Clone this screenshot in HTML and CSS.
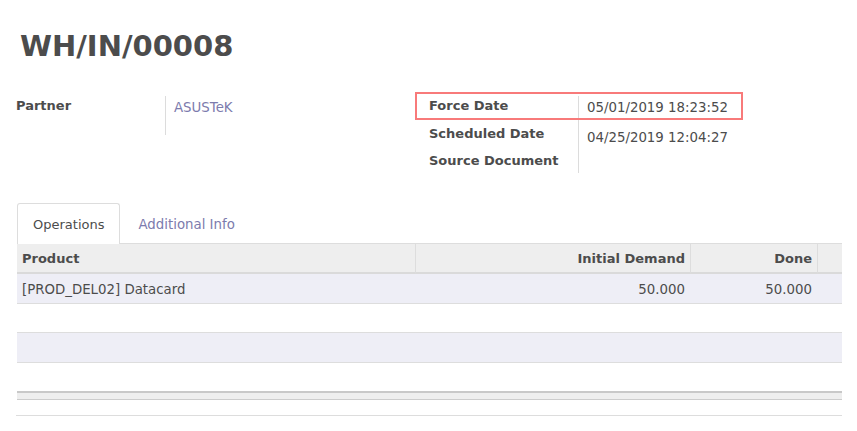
FILE: index.html
```html
<!DOCTYPE html>
<html lang="en">
<head>
<meta charset="utf-8">
<title>WH/IN/00008</title>
<link rel="stylesheet" href="styles.css">
</head>
<body>
<div class="sheet">
  <h1 class="title">WH/IN/00008</h1>

  <div class="groups">
    <div class="group">
      <div class="row row-partner">
        <div class="label">Partner</div>
        <div class="value"><span class="link">ASUSTeK</span></div>
      </div>
    </div>
    <div class="group group-right">
      <div class="highlight"></div>
      <div class="row row-a">
        <div class="label">Force Date</div>
        <div class="value v1">05/01/2019 18:23:52</div>
      </div>
      <div class="row row-b">
        <div class="label">Scheduled Date</div>
        <div class="value v2">04/25/2019 12:04:27</div>
      </div>
      <div class="row row-c">
        <div class="label">Source Document</div>
        <div class="value"></div>
      </div>
    </div>
  </div>

  <div class="notebook">
    <ul class="tabs">
      <li class="tab active">Operations</li>
      <li class="tab">Additional Info</li>
    </ul>
    <table class="list">
      <colgroup>
        <col class="c-product">
        <col class="c-demand">
        <col class="c-done">
        <col class="c-trash">
      </colgroup>
      <thead>
        <tr>
          <th class="left">Product</th>
          <th class="num sep">Initial Demand</th>
          <th class="num sep">Done</th>
          <th class="sep"></th>
        </tr>
      </thead>
      <tbody>
        <tr class="odd r-data">
          <td class="left">[PROD_DEL02] Datacard</td>
          <td class="num">50.000</td>
          <td class="num">50.000</td>
          <td></td>
        </tr>
        <tr class="even r-empty"><td></td><td></td><td></td><td></td></tr>
        <tr class="odd r-empty2"><td></td><td></td><td></td><td></td></tr>
        <tr class="even r-last"><td></td><td></td><td></td><td></td></tr>
      </tbody>
      <tfoot>
        <tr><td></td><td></td><td></td><td></td></tr>
      </tfoot>
    </table>
  </div>

  <div class="chatter"></div>
</div>
</body>
</html>
```

FILE: styles.css
```css
html, body {
  margin: 0;
  padding: 0;
  background: #ffffff;
}

body {
  font-family: "DejaVu Sans", Verdana, sans-serif;
  font-size: 13.33px;
  line-height: 20px;
  color: #4c4c4c;
}

.sheet {
  width: 826px;
  padding: 29px 0 0 16px;
}

.title {
  margin: 0 0 32px 4px;
  font-size: 29px;
  line-height: 35px;
  font-weight: bold;
  color: #4c4c4c;
}

.groups {
  display: flex;
}

.group {
  width: 413px;
  display: flex;
  flex-direction: column;
}

.group-right {
  position: relative;
}

.row {
  display: grid;
  grid-template-columns: 149px 1fr;
}

.label {
  font-weight: bold;
  font-size: 13px;
}

.value {
  border-left: 1px solid #dcdcdc;
  padding-left: 8px;
}

.row-partner {
  height: 39px;
}
.row-partner .value {
  padding-top: 2px;
}

.link {
  color: #7c7bad;
}

.row-a { height: 28px; }
.row-b { height: 27px; }
.row-c { height: 22px; }

.v1 { padding-top: 2px; }
.v2 { padding-top: 4px; }

.highlight {
  position: absolute;
  left: -14px;
  top: -4px;
  width: 328px;
  height: 28px;
  box-sizing: border-box;
  border: 2px solid #f87a7a;
}

.notebook {
  margin-top: 30px;
  margin-left: 1px;
}

.tabs {
  list-style: none;
  margin: 0;
  padding: 0;
  display: flex;
  border-bottom: 1px solid #dddddd;
}

.tab {
  padding: 11px 15px 8px;
  margin-right: 2px;
  margin-bottom: -1px;
  border: 1px solid transparent;
  border-bottom: none;
  border-radius: 3px 3px 0 0;
  color: #7c7bad;
}

.tab.active {
  color: #4c4c4c;
  font-size: 13px;
  background: #ffffff;
  border-color: #dddddd;
  padding-bottom: 9px;
}

.list {
  width: 825px;
  table-layout: fixed;
  border-collapse: separate;
  border-spacing: 0;
}

.c-product { width: 398px; }
.c-demand { width: 275px; }
.c-done { width: 127px; }
.c-trash { width: 25px; }

.list th,
.list td {
  padding: 0 5px;
  white-space: nowrap;
  overflow: hidden;
}

.list th {
  background: #eeeeee;
  font-weight: bold;
  font-size: 13px;
  border-bottom: 2px solid #dadada;
  box-sizing: border-box;
  padding-top: 5px;
  padding-bottom: 3px;
  height: 30px;
  text-align: left;
}

.list th.sep {
  border-left: 1px solid #dddddd;
}

.list .num {
  text-align: right;
}

.list tbody td {
  border-bottom: 1px solid #dddddd;
}

.list tr.odd td {
  background: #eeeef6;
}

.r-data td {
  padding-top: 2px;
  box-sizing: border-box;
  height: 30px;
}

.r-empty td {
  height: 29px;
  box-sizing: border-box;
}

.r-empty2 td {
  height: 30px;
  box-sizing: border-box;
}

.list tbody tr.r-last td {
  height: 28px;
  border-bottom: none;
  box-sizing: border-box;
}

.list tfoot td {
  background: #eeeeee;
  border-top: 2px solid #c8c8c8;
  border-bottom: 1px solid #cccccc;
  height: 9px;
  box-sizing: border-box;
  padding: 0;
}

.chatter {
  margin-top: 15px;
  border-top: 1px solid #dddddd;
  width: 826px;
}
```
